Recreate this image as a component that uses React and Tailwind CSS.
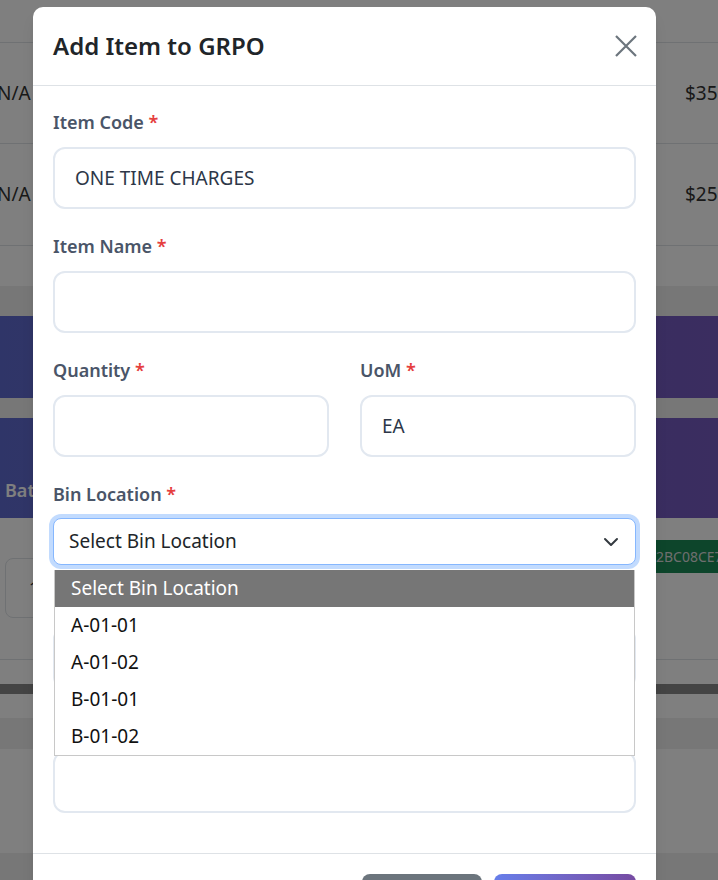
import React from "react";

const bins = ["A-01-01", "A-01-02", "B-01-01", "B-01-02"];

// Regular text input with label
const Field = ({ label, value = "", className = "" }) => (
  <div className={"mb-6 " + className}>
    <label className="mb-3 block h-[26px] text-[18px] font-semibold leading-[26px] text-[#4a5568]">
      {label} <span className="text-[#e53e3e]">*</span>
    </label>
    <input
      readOnly
      value={value}
      className="block h-[62px] w-full rounded-xl border-2 border-[#e2e8f0] bg-white px-5 text-[19px] text-[#2d3748] outline-none"
    />
  </div>
);

const ChevronDown = () => (
  <svg width="16" height="16" viewBox="0 0 16 16" fill="none">
    <path d="M2 5l6 6 6-6" stroke="#343a40" strokeWidth="2" strokeLinecap="round" strokeLinejoin="round" />
  </svg>
);

const Background = () => (
  <div className="text-[#333]">
    <div className="h-[43px] border-b border-[#dee2e6]" />
    <div className="flex h-[101px] items-center justify-between border-b border-[#dee2e6] text-[19px]">
      <span className="-ml-[3px]">N/A</span>
      <span className="w-[33px] overflow-hidden whitespace-nowrap">$350.00</span>
    </div>
    <div className="flex h-[102px] items-center justify-between border-b border-[#dee2e6] text-[19px]">
      <span className="-ml-[3px]">N/A</span>
      <span className="w-[33px] overflow-hidden whitespace-nowrap">$250.00</span>
    </div>
    <div className="h-[40px]" />
    <div className="bg-[#eeeeee] pt-[30px]">
      <div className="h-[82px] bg-gradient-to-r from-[#5f6bd0] to-[#765ac0]" />
      <div className="h-[20px]" />
      <div className="flex h-[100px] items-end bg-gradient-to-r from-[#5f6bd0] to-[#765ac0] pb-[14px] pl-[5px] text-[18px] font-semibold text-white">
        Batch Number
      </div>
      <div className="flex h-[142px] items-start border-b border-[#dee2e6] bg-white">
        <div className="ml-[5px] mt-[40px] flex h-[60px] w-[110px] items-center rounded-lg border border-[#dee2e6] pl-[23px] text-[17px]">
          1
        </div>
        <div className="ml-auto mt-[22px] flex h-[33px] w-[63px] items-center overflow-hidden whitespace-nowrap bg-[#1a8a56] pl-[1px] text-[14px] text-[#dddddd]">
          2BC08CE7
        </div>
      </div>
      <div className="h-[24px] bg-white" />
      <div className="h-[10px] bg-[#888888]" />
      <div className="h-[24px] bg-white" />
      <div className="h-[31px]" />
      <div className="h-[104px] bg-white" />
      <div className="h-[40px]" />
    </div>
  </div>
);

const App = () => {
  return (
    <div className="relative h-[880px] w-[718px] overflow-hidden bg-white font-['Noto_Sans',sans-serif]">
      <Background />
      <div className="absolute inset-0 bg-black/50" />

      <div className="absolute left-[33px] top-[7px] w-[623px] rounded-[10px] bg-white shadow-lg">
        {/* header */}
        <div className="flex h-[79px] items-center justify-between border-b border-[#dee2e6] px-5">
          <h5 className="text-[24px] font-semibold text-[#212529]">Add Item to GRPO</h5>
          <button className="mr-[-2px] flex h-[24px] w-[24px] items-center justify-center">
            <svg width="22" height="22" viewBox="0 0 22 22">
              <path d="M1 1L21 21M21 1L1 21" stroke="#6c757d" strokeWidth="2.2" />
            </svg>
          </button>
        </div>

        {/* body */}
        <div className="px-5 pb-4 pt-[23px]">
          <Field label="Item Code" value="ONE TIME CHARGES" />
          <Field label="Item Name" />
          <div className="grid grid-cols-2 gap-[31px]">
            <Field label="Quantity" />
            <Field label="UoM" value="EA" />
          </div>

          <div className="mb-6">
            <label className="mb-[11px] block h-[26px] text-[18px] font-semibold leading-[26px] text-[#4a5568]">
              Bin Location <span className="text-[#e53e3e]">*</span>
            </label>
            <div className="relative">
              <div className="flex h-[47px] items-center justify-between rounded-lg border border-[#86b7fe] bg-white pl-[15px] pr-[16px] text-[19px] text-[#212529] ring-4 ring-[#0d6efd]/25">
                <span>Select Bin Location</span>
                <ChevronDown />
              </div>
              {/* open option list */}
              <ul className="absolute left-[1px] right-[1px] top-full z-10 mt-[5px] border-x border-b border-[#c8c8c8] bg-white text-[19px]">
                <li className="flex h-[37px] items-center bg-[#767676] pl-4 text-white">Select Bin Location</li>
                {bins.map((b) => (
                  <li key={b} className="flex h-[37px] items-center pl-4 text-[#111]">
                    {b}
                  </li>
                ))}
              </ul>
            </div>
          </div>

          <Field label="Batch Number" />
          <Field label="Remarks" />
        </div>

        {/* footer */}
        <div className="flex justify-end gap-3 border-t border-[#dee2e6] px-5 pb-5 pt-[20px]">
          <button className="h-[40px] w-[120px] rounded-lg bg-[#6c757d] text-[17px] text-white">Cancel</button>
          <button className="h-[40px] w-[142px] rounded-lg bg-gradient-to-r from-[#667eea] to-[#764ba2] text-[17px] font-semibold text-white">
            Add Item
          </button>
        </div>
      </div>
    </div>
  );
};

export default App;
